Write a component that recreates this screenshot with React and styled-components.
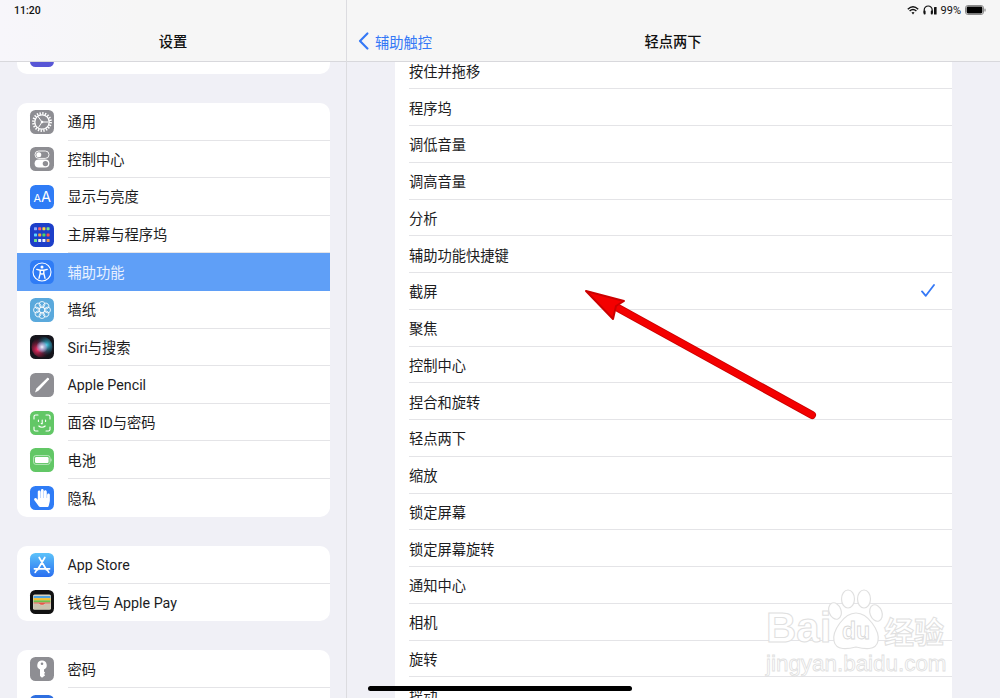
import React from 'react';
import styled, { createGlobalStyle } from 'styled-components';
import { FaHandPaper } from 'react-icons/fa';

const GlobalStyle = createGlobalStyle`
  html, body {
    margin: 0;
    padding: 0;
    background: #f0f0f6;
  }
  body {
    font-family: Roboto, "Noto Sans CJK SC", sans-serif;
    color: #1c1c1e;
    overflow: hidden;
  }
`;

const Glyph = ({ children }) => (
  <svg width="24" height="24" viewBox="0 0 24 24" fill="none">{children}</svg>
);

const GearIcon = () => (
  <Glyph>
    <circle cx="12" cy="12" r="8.6" stroke="#fff" strokeWidth="2.6" strokeDasharray="1.35 1.35" />
    <circle cx="12" cy="12" r="7.2" stroke="#fff" strokeWidth="1.3" />
    <circle cx="12" cy="12" r="1.3" fill="#fff" />
    <path d="M12 12 L8 6.5 M12 12 L18.5 12 M12 12 L8.5 17.5" stroke="#fff" strokeWidth="1" />
  </Glyph>
);

const ControlIcon = () => (
  <Glyph>
    <rect x="5" y="4" width="14" height="7.4" rx="3.7" stroke="#fff" strokeWidth="0.9" />
    <circle cx="8.8" cy="7.7" r="2.5" fill="#fff" />
    <rect x="4.6" y="12.6" width="14.8" height="8" rx="4" fill="#fff" />
    <circle cx="15.4" cy="16.6" r="2.7" fill="#8e8e93" />
  </Glyph>
);

const DisplayIcon = () => (
  <Glyph>
    <text x="3.4" y="17.4" fontSize="11" fill="#fff" fontFamily="Inter, sans-serif">A</text>
    <text x="11" y="17.4" fontSize="14.5" fill="#fff" fontFamily="Inter, sans-serif">A</text>
  </Glyph>
);

const homeDots = ['#8fa8ff', '#ff5f6d', '#ffd23f', '#7ee081', '#5ad1ff', '#ff9f40', '#4cd964', '#ff4d4d', '#6fe38a', '#eef2ff', '#eef2ff', '#ef9a4a'];

const HomeIcon = () => (
  <Glyph>
    {homeDots.map((c, i) => (
      <rect key={i} x={4 + (i % 4) * 4.2} y={[4.2, 10.4, 16][Math.floor(i / 4)]} width="3" height="3" rx="0.6" fill={c} />
    ))}
  </Glyph>
);

const AccessIcon = () => (
  <Glyph>
    <circle cx="12" cy="12" r="9" stroke="#fff" strokeWidth="1.1" />
    <circle cx="12" cy="7" r="1.5" fill="#fff" />
    <path d="M6.8 9.4 L10.2 10.3 V13.4 L9 18.2 M17.2 9.4 L13.8 10.3 V13.4 L15 18.2 M10.2 10.3 H13.8 M10.2 13.6 L12 14 L13.8 13.6" stroke="#fff" strokeWidth="1.4" strokeLinecap="round" strokeLinejoin="round" />
  </Glyph>
);

const WallpaperIcon = () => (
  <Glyph>
    {[0, 45, 90, 135, 180, 225, 270, 315].map(a => (
      <circle key={a} cx="12" cy="6.4" r="2.9" stroke="#fff" strokeWidth="0.8" transform={`rotate(${a} 12 12)`} />
    ))}
    <circle cx="12" cy="12" r="2.8" stroke="#fff" strokeWidth="0.8" />
  </Glyph>
);

const SiriIcon = () => (
  <Glyph>
    <defs>
      <radialGradient id="siriA" cx="0.3" cy="0.62" r="0.55">
        <stop offset="0" stopColor="#ff2f68" />
        <stop offset="1" stopColor="#7a1030" stopOpacity="0" />
      </radialGradient>
      <radialGradient id="siriB" cx="0.72" cy="0.4" r="0.5">
        <stop offset="0" stopColor="#3fd0e6" />
        <stop offset="1" stopColor="#1a5a80" stopOpacity="0" />
      </radialGradient>
      <radialGradient id="siriC" cx="0.5" cy="0.5" r="0.5">
        <stop offset="0" stopColor="#f6f8ff" />
        <stop offset="0.55" stopColor="#c8b8e8" stopOpacity="0.6" />
        <stop offset="1" stopColor="#c8b8e8" stopOpacity="0" />
      </radialGradient>
    </defs>
    <circle cx="12" cy="12" r="10.5" fill="url(#siriA)" />
    <circle cx="12" cy="12" r="10.5" fill="url(#siriB)" />
    <circle cx="12" cy="12" r="6" fill="url(#siriC)" />
  </Glyph>
);

const PencilIcon = () => (
  <Glyph>
    <path d="M5 19.5 L6.4 15.6 L17.4 4.8 C18.2 4.2 19.6 5.6 19 6.5 L8.4 17.8 Z" fill="#fff" />
  </Glyph>
);

const FaceIcon = () => (
  <Glyph>
    <path d="M4 8 V5.6 A1.6 1.6 0 0 1 5.6 4 H8 M16 4 H18.4 A1.6 1.6 0 0 1 20 5.6 V8 M20 16 V18.4 A1.6 1.6 0 0 1 18.4 20 H16 M8 20 H5.6 A1.6 1.6 0 0 1 4 18.4 V16" stroke="#fff" strokeWidth="1.1" strokeLinecap="round" />
    <path d="M8.4 9 V10.4 M15.6 9 V10.4 M12.2 9 V12.6 H11.2 M8.8 15 C10.4 16.6 13.6 16.6 15.2 15" stroke="#fff" strokeWidth="1.1" strokeLinecap="round" />
  </Glyph>
);

const BatteryAppIcon = () => (
  <Glyph>
    <rect x="3.6" y="7.6" width="16.4" height="8.8" rx="2.2" stroke="#cdeecf" strokeWidth="0.8" />
    <rect x="5" y="9" width="13.6" height="6" rx="1.2" fill="#fff" />
    <rect x="20.6" y="10.6" width="0.9" height="2.8" rx="0.4" fill="#cdeecf" />
  </Glyph>
);

const StoreIcon = () => (
  <Glyph>
    <path d="M14.8 4.5 L7.6 16.8 M9.2 4.5 L16.4 16.8 M4.4 15.8 H19.6 M5.2 19.4 L6.4 17.4 M18.8 19.4 L17.6 17.4" stroke="#fff" strokeWidth="1.7" strokeLinecap="round" />
  </Glyph>
);

const WalletIcon = () => (
  <Glyph>
    <rect x="3" y="4.4" width="18" height="15.4" rx="1.6" fill="#d8d3c2" />
    <rect x="3.6" y="6" width="16.8" height="2.2" fill="#4da3e0" />
    <rect x="3.6" y="8.2" width="16.8" height="2.2" fill="#f5c02e" />
    <rect x="3.6" y="10.4" width="16.8" height="2" fill="#6cc24a" />
    <path d="M3.6 12.4 H20.4 V13.4 H15 C14 15.2 10 15.2 9 13.4 H3.6 Z" fill="#e8574a" />
    <path d="M3.6 14 H9 C10 15.8 14 15.8 15 14 H20.4 V19 H3.6 Z" fill="#c9c3ae" />
  </Glyph>
);

const KeyIcon = () => (
  <Glyph>
    <path fillRule="evenodd" d="M12 3.6 A4.6 4.6 0 0 1 14 12.4 V14.6 L15.2 15.7 L14 17 L15.2 18.2 L12 20.8 L10 19 V12.4 A4.6 4.6 0 0 1 12 3.6 Z M12 5.4 A1.3 1.3 0 1 0 12 8 A1.3 1.3 0 1 0 12 5.4 Z" fill="#fff" />
  </Glyph>
);

const HandIcon = () => <FaHandPaper size={18} color="#fff" />;

const sidebarGroups = [
  [{ label: '', color: '#5856d6' }],
  [
    { label: '通用', color: '#8e8e93', icon: GearIcon },
    { label: '控制中心', color: '#8e8e93', icon: ControlIcon },
    { label: '显示与亮度', color: '#2f7cf6', icon: DisplayIcon },
    { label: '主屏幕与程序坞', color: '#1d3fc9', icon: HomeIcon },
    { label: '辅助功能', color: '#2f7cf6', icon: AccessIcon, active: true },
    { label: '墙纸', color: '#5aa9dc', icon: WallpaperIcon },
    { label: 'Siri与搜索', color: '#15151c', icon: SiriIcon },
    { label: 'Apple Pencil', color: '#8e8e93', icon: PencilIcon },
    { label: '面容 ID与密码', color: '#62c766', icon: FaceIcon },
    { label: '电池', color: '#62c766', icon: BatteryAppIcon },
    { label: '隐私', color: '#2f7cf6', icon: HandIcon },
  ],
  [
    { label: 'App Store', color: 'linear-gradient(#5cc3fa, #2a6ff0)', icon: StoreIcon },
    { label: '钱包与 Apple Pay', color: '#111', icon: WalletIcon },
  ],
  [
    { label: '密码', color: '#8e8e93', icon: KeyIcon },
    { label: '', color: '#2f6fe0' },
  ],
];

const gestures = [
  '按住并拖移', '程序坞', '调低音量', '调高音量', '分析', '辅助功能快捷键', '截屏', '聚焦', '控制中心',
  '捏合和旋转', '轻点两下', '缩放', '锁定屏幕', '锁定屏幕旋转', '通知中心', '相机', '旋转', '摇动',
];

const App = () => (
  <Page>
    <GlobalStyle />
    <Sidebar>
      <NavBar>
        <NavTitle>设置</NavTitle>
      </NavBar>
      <SidebarScroll>
        {sidebarGroups.map((group, g) => (
          <Group key={g}>
            {group.map((item, i) => {
              const Icon = item.icon;
              return (
                <SideRow key={i} $active={item.active}>
                  <AppIcon $color={item.color}>{Icon && <Icon />}</AppIcon>
                  <SideLabel $active={item.active} $last={i === group.length - 1}>{item.label}</SideLabel>
                </SideRow>
              );
            })}
          </Group>
        ))}
      </SidebarScroll>
    </Sidebar>

    <Detail>
      <DetailNav>
        <BackLink>
          <svg width="11" height="18" viewBox="0 0 11 18" fill="none">
            <path d="M9.4 1.4 L2 9 L9.4 16.6" stroke="#3478f6" strokeWidth="2.1" strokeLinecap="round" strokeLinejoin="round" />
          </svg>
          <span>辅助触控</span>
        </BackLink>
        <NavTitle>轻点两下</NavTitle>
      </DetailNav>
      <Card>
        {gestures.map(name => (
          <GestureRow key={name}>
            <GestureLabel>{name}</GestureLabel>
            {name === '截屏' && (
              <svg width="14" height="13" viewBox="0 0 14 13" fill="none">
                <path d="M1 7.4 L4.8 11.8 L13 1" stroke="#3478f6" strokeWidth="1.8" strokeLinecap="round" strokeLinejoin="round" />
              </svg>
            )}
          </GestureRow>
        ))}
      </Card>
    </Detail>

    <StatusBar>
      <span>11:20</span>
      <StatusRight>
        <svg width="12" height="9" viewBox="0 0 12 9" fill="none">
          <path d="M0.8 3.2 C4 0.2 8 0.2 11.2 3.2 M2.6 5 C4.8 3 7.2 3 9.4 5" stroke="#111" strokeWidth="1.4" />
          <path d="M4.5 6.6 C5.5 5.8 6.5 5.8 7.5 6.6 L6 8.4 Z" fill="#111" />
        </svg>
        <svg width="14" height="10" viewBox="0 0 14 10" fill="none">
          <path d="M1.2 8 V5 A4 4 0 0 1 9.2 5 V8" stroke="#111" strokeWidth="1.2" />
          <rect x="0.6" y="5.6" width="2" height="4" rx="0.8" fill="#111" />
          <rect x="7.8" y="5.6" width="2" height="4" rx="0.8" fill="#111" />
          <rect x="11" y="2" width="2.6" height="7.6" rx="0.5" fill="#111" />
        </svg>
        <Percent>99%</Percent>
        <svg width="21" height="10" viewBox="0 0 21 10" fill="none">
          <rect x="0.5" y="0.5" width="18" height="9" rx="2.4" stroke="#8a8a8a" />
          <rect x="1.6" y="1.6" width="15.8" height="6.8" rx="1.4" fill="#000" />
          <rect x="19.4" y="3.4" width="1.2" height="3.2" rx="0.6" fill="#8a8a8a" />
        </svg>
      </StatusRight>
    </StatusBar>

    <Arrow width="240" height="136" viewBox="580 286 240 136">
      <path d="M812 415 L618 308" stroke="#cc0000" strokeWidth="8" strokeLinecap="round" />
      <path d="M812 415 L618 308" stroke="#f40000" strokeWidth="6" strokeLinecap="round" />
      <path d="M586 291 L624 301 L616 306 L613 319 Z" fill="#f40000" stroke="#cc0000" strokeWidth="2" strokeLinejoin="round" />
    </Arrow>

    <Watermark>
      <WatermarkTop>
        <WatermarkLatin>Bai</WatermarkLatin>
        <Paw>
          <svg width="56" height="62" viewBox="0 0 56 62" fill="#fff" stroke="#e0e0e0" strokeWidth="1.2">
            <ellipse cx="20" cy="10" rx="6.5" ry="9" />
            <ellipse cx="36" cy="10" rx="6.5" ry="9" />
            <ellipse cx="7" cy="22" rx="6" ry="8.5" transform="rotate(-20 7 22)" />
            <ellipse cx="48" cy="24" rx="6" ry="8.5" transform="rotate(-20 48 24)" />
            <path d="M28 24 C40 24 52 42 50 52 C48 62 36 60 28 58 C20 60 8 62 6 52 C4 42 16 24 28 24 Z" />
          </svg>
          <PawText>du</PawText>
        </Paw>
        <WatermarkCjk>经验</WatermarkCjk>
      </WatermarkTop>
      <WatermarkUrl>jingyan.baidu.com</WatermarkUrl>
    </Watermark>

    <HomeIndicator />
  </Page>
);

export default App;

const Page = styled.div`
  position: relative;
  display: flex;
  width: 1000px;
  height: 698px;
  overflow: hidden;
  background: #f0f0f6;
`;

const Sidebar = styled.aside`
  width: 347px;
  flex: none;
  height: 100%;
  box-sizing: border-box;
  overflow: hidden;
  border-right: 1px solid #dcdce0;
`;

const NavBar = styled.header`
  position: relative;
  z-index: 1;
  display: flex;
  align-items: center;
  justify-content: center;
  height: 62px;
  box-sizing: border-box;
  padding-top: 20px;
  background: linear-gradient(90deg, #f7f6fb, #f6f6f6 40%);
  border-bottom: 1px solid #d8d8dc;
`;

const DetailNav = styled(NavBar)`
  padding-right: 1px;
  background: #f6f6f6;
`;

const NavTitle = styled.h1`
  margin: 0;
  font-size: 14.25px;
  font-weight: 500;
  color: #111;
`;

const SidebarScroll = styled.div`
  display: flex;
  flex-direction: column;
  gap: 29.4px;
  margin-top: -26px;
  padding: 0 16px 0 17px;
`;

const Group = styled.section`
  background: #fff;
  border-radius: 10px;
  overflow: hidden;
`;

const SideRow = styled.div`
  display: flex;
  align-items: center;
  height: 37.6px;
  padding-left: 13px;
  background: ${p => (p.$active ? '#5f9ff7' : 'transparent')};
`;

const AppIcon = styled.div`
  display: flex;
  align-items: center;
  justify-content: center;
  flex: none;
  width: 24px;
  height: 24px;
  border-radius: 5.5px;
  background: ${p => p.$color};
`;

const SideLabel = styled.div`
  flex: 1;
  display: flex;
  align-items: center;
  align-self: stretch;
  box-sizing: border-box;
  margin-left: 13.5px;
  padding-top: 2px;
  font-size: 14.25px;
  line-height: 20px;
  color: ${p => (p.$active ? '#eaf2ff' : '#1c1c1e')};
  border-bottom: ${p => (p.$last || p.$active ? 'none' : '1px solid #e4e4e7')};
`;

const Detail = styled.main`
  flex: 1;
  min-width: 0;
  height: 100%;
  overflow: hidden;
`;

const BackLink = styled.div`
  position: absolute;
  left: 11px;
  top: 33px;
  display: flex;
  align-items: center;
  gap: 6px;
  height: 16px;
  font-size: 14.25px;
  color: #3478f6;
`;

const Card = styled.section`
  margin: -9.5px 48px 0 48px;
  background: #fff;
`;

const GestureRow = styled.div`
  display: flex;
  align-items: center;
  justify-content: space-between;
  height: 36.75px;
  box-sizing: border-box;
  margin-left: 14px;
  padding-right: 17px;
  border-bottom: 1px solid #e4e4e7;
`;

const GestureLabel = styled.span`
  font-size: 14.25px;
  color: #1c1c1e;
`;

const StatusBar = styled.div`
  position: absolute;
  z-index: 2;
  top: 3px;
  left: 14px;
  right: 14px;
  display: flex;
  align-items: center;
  justify-content: space-between;
  height: 14px;
  font-size: 10.5px;
  font-weight: 500;
  color: #111;
`;

const StatusRight = styled.div`
  display: flex;
  align-items: center;
  gap: 4px;
`;

const Percent = styled.span`
  font-size: 11px;
  font-weight: 400;
`;

const Arrow = styled.svg`
  position: absolute;
  z-index: 3;
  left: 580px;
  top: 286px;
`;

const Watermark = styled.div`
  position: absolute;
  z-index: 3;
  left: 766px;
  top: 589px;
  display: flex;
  flex-direction: column;
  width: 190px;
`;

const WatermarkTop = styled.div`
  display: flex;
  align-items: flex-end;
  height: 62px;
  white-space: nowrap;
`;

const outlined = `
  color: #fff;
  -webkit-text-stroke: 1px #e0e0e0;
`;

const WatermarkLatin = styled.span`
  ${outlined}
  width: 62px;
  flex: none;
  font-family: "Liberation Sans", sans-serif;
  font-size: 42px;
  font-weight: 700;
  line-height: 46px;
`;

const Paw = styled.div`
  position: relative;
  width: 56px;
  height: 62px;
  flex: none;
`;

const PawText = styled.span`
  position: absolute;
  left: 14px;
  bottom: 6px;
  color: #fff;
  -webkit-text-stroke: 0.8px #d8d8d8;
  font-family: "Liberation Sans", sans-serif;
  font-size: 23px;
  font-weight: 700;
`;

const WatermarkCjk = styled.span`
  ${outlined}
  flex: none;
  font-family: "Noto Sans CJK SC", sans-serif;
  font-size: 30px;
  font-weight: 700;
  line-height: 42px;
`;

const WatermarkUrl = styled.span`
  color: #fff;
  -webkit-text-stroke: 0.8px #e0e0e0;
  font-family: "Liberation Sans", sans-serif;
  font-size: 22.4px;
  line-height: 26px;
  white-space: nowrap;
`;

const HomeIndicator = styled.div`
  position: absolute;
  z-index: 4;
  left: 368px;
  top: 686px;
  width: 264px;
  height: 5px;
  border-radius: 3px;
  background: #000;
`;
